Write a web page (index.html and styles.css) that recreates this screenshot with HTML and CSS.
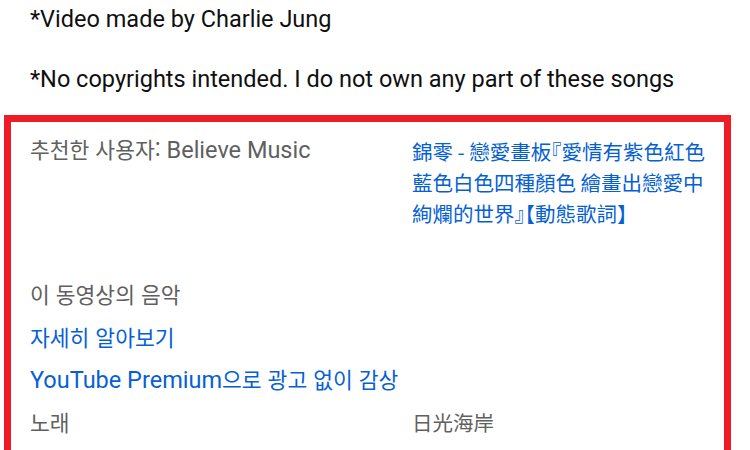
FILE: index.html
```html
<!DOCTYPE html>
<html lang="ko">
<head>
<meta charset="utf-8">
<link rel="stylesheet" href="styles.css">
</head>
<body>
<div class="desc">
  <p class="desc-line">*Video made by Charlie Jung</p>
  <p class="desc-line">*No copyrights intended. I do not own any part of these songs</p>
</div>
<section class="music-box">
  <div class="pair">
    <div class="label"><span class="ko">추천한 사용자:</span> Believe Music</div>
    <a class="link title" lang="zh-Hant">錦零 - 戀愛畫板『愛情有紫色紅色<br>藍色白色四種顏色 繪畫出戀愛中<br>絢爛的世界』【動態歌詞】</a>
  </div>
  <div class="music">
    <div class="label ko">이 동영상의 음악</div>
    <a class="link ko">자세히 알아보기</a>
    <a class="link">YouTube Premium<span class="ko">으로 광고 없이 감상</span></a>
  </div>
  <div class="pair song">
    <div class="label ko">노래</div>
    <div class="label cjk" lang="zh-Hant">日光海岸</div>
  </div>
</section>
</body>
</html>
```
FILE: styles.css
```css
html, body {
  margin: 0;
  padding: 0;
  background: #ffffff;
}
body {
  font-family: Roboto, "Noto Sans CJK KR", "Noto Sans CJK TC", sans-serif;
  font-size: 23.5px;
  color: #0f0f0f;
  width: 750px;
  height: 450px;
  overflow: hidden;
  display: flex;
  flex-direction: column;
}
.desc {
  padding: 2px 0 0 30px;
  display: flex;
  flex-direction: column;
  gap: 26px;
}
.desc-line {
  margin: 0;
  line-height: 34px;
}
.music-box {
  flex: 1;
  min-height: 0;
  overflow: hidden;
  margin: 19px 0 0 4px;
  width: 727px;
  box-sizing: border-box;
  border: 7px solid #ee1d25;
  border-bottom: none;
  padding: 11px 0 0 19px;
  display: flex;
  flex-direction: column;
}
.pair {
  display: grid;
  grid-template-columns: 382px 1fr;
}
.label {
  color: #606060;
  line-height: 32px;
}
.link {
  color: #065fd4;
  line-height: 32px;
  text-decoration: none;
}
.ko {
  font-family: "Noto Sans CJK KR", sans-serif;
  font-size: 21.5px;
}
.cjk {
  font-family: "Noto Sans CJK TC", sans-serif;
  font-size: 20.5px;
}
.title {
  font-family: "Noto Sans CJK TC", sans-serif;
  font-size: 20.5px;
  line-height: 31px;
  padding-top: 3px;
  white-space: nowrap;
  font-feature-settings: "halt";
}
.music {
  margin-top: 49px;
  display: flex;
  flex-direction: column;
  gap: 10.5px;
}
.song {
  margin-top: 10px;
}
```
